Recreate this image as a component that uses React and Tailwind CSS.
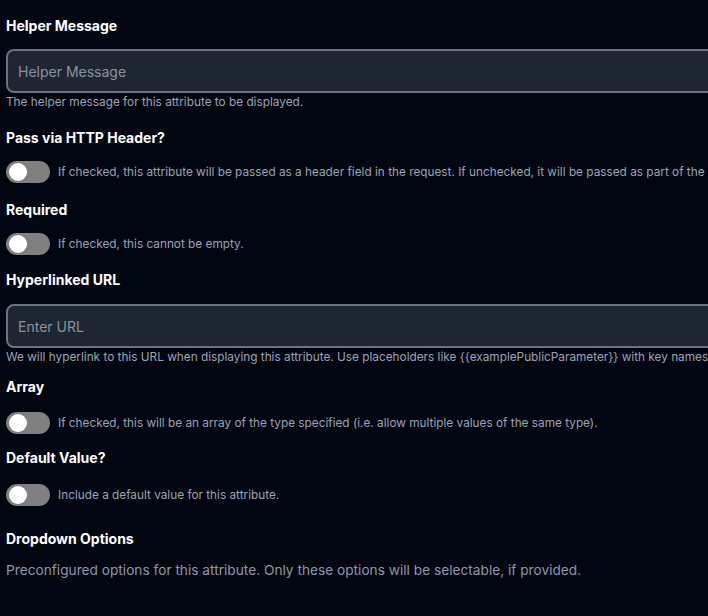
import React, {useState} from 'react';

const Label = ({className, children}) => (
    <div className={`text-sm font-bold leading-5 text-white ${className}`}>{children}</div>
);

const Toggle = ({checked, onChange, text, className}) => (
    <div className={`flex items-center gap-2 ${className}`}>
        <button
            type="button"
            onClick={() => onChange(!checked)}
            className={`relative h-[22px] w-11 shrink-0 rounded-full ${checked ? 'bg-blue-600' : 'bg-[#808080]'}`}
        >
            <span
                className={`absolute top-[2px] h-[18px] w-[18px] rounded-full bg-white ${checked ? 'left-[24px]' : 'left-[3px]'}`}
            />
        </button>
        <span className="whitespace-nowrap text-[11.8px] leading-4 text-[#9aa3b3]">{text}</span>
    </div>
);

const TextField = ({placeholder, value, onChange}) => (
    <input
        type="text"
        placeholder={placeholder}
        value={value}
        onChange={(e) => onChange(e.target.value)}
        className="h-11 w-full rounded-lg border-2 border-[#6b7280] bg-[#1f2633] px-[10px] text-sm text-white placeholder:text-[#8a919e] focus:outline-none"
    />
);

export default function App() {
    const [helper, setHelper] = useState('');
    const [url, setUrl] = useState('');
    const [header, setHeader] = useState(false);
    const [required, setRequired] = useState(false);
    const [array, setArray] = useState(false);
    const [hasDefault, setHasDefault] = useState(false);

    return (
        <div className="min-h-screen w-full overflow-hidden bg-[#020611]" style={{fontFamily: 'Inter, "Noto Sans", sans-serif'}}>
            <div className="w-[1000px] px-[6px] pt-[16px] pb-8">
                {/* Helper message */}
                <Label className="mb-[13px]">Helper Message</Label>
                <TextField placeholder="Helper Message" value={helper} onChange={setHelper}/>
                <p className="mt-px text-[11.8px] leading-4 text-[#9aa3b3]">The helper message for this attribute to be displayed.</p>

                <Label className="mt-[18px] mb-[13px]">Pass via HTTP Header?</Label>
                <Toggle checked={header} onChange={setHeader}
                        text="If checked, this attribute will be passed as a header field in the request. If unchecked, it will be passed as part of the payload."/>

                <Label className="mt-[17px] mb-[13px]">Required</Label>
                <Toggle checked={required} onChange={setRequired} text="If checked, this cannot be empty."/>

                <Label className="mt-[15px] mb-[14px]">Hyperlinked URL</Label>
                <TextField placeholder="Enter URL" value={url} onChange={setUrl}/>
                <p className="mt-px whitespace-nowrap text-[11.8px] leading-4 text-[#9aa3b3]">
                    We will hyperlink to this URL when displaying this attribute. Use placeholders like {'{{examplePublicParameter}}'} with key names of your public parameters.
                </p>

                <Label className="mt-[12px] mb-[15px]">Array</Label>
                <Toggle checked={array} onChange={setArray}
                        text="If checked, this will be an array of the type specified (i.e. allow multiple values of the same type)."/>

                <Label className="mt-[14px] mb-[16px]">Default Value?</Label>
                <Toggle checked={hasDefault} onChange={setHasDefault} text="Include a default value for this attribute."/>

                <Label className="mt-[23px]">Dropdown Options</Label>
                <p className="mt-[11px] text-[13.7px] leading-5 text-[#8e97a6]">
                    Preconfigured options for this attribute. Only these options will be selectable, if provided.
                </p>
            </div>
        </div>
    );
}
